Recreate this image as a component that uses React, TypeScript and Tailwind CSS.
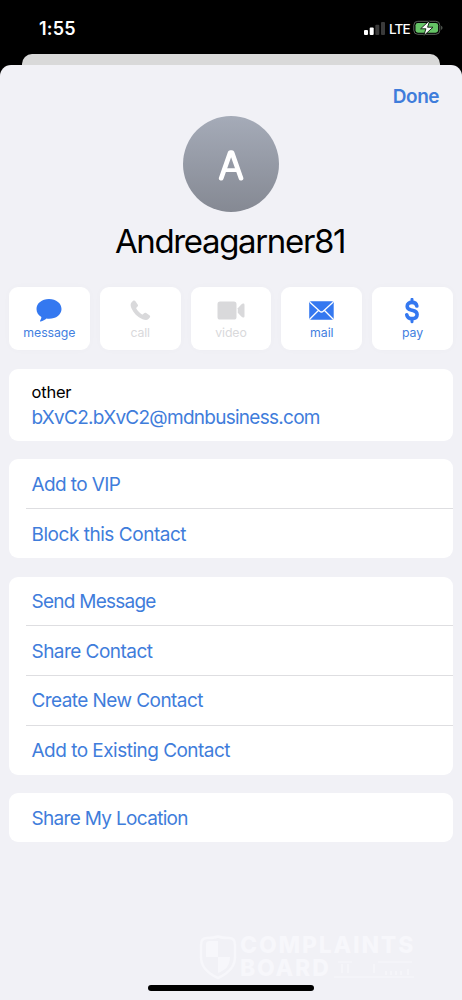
import type { ReactNode } from "react";

type Action = { label: string; icon: ReactNode; enabled: boolean; tracking: string };

const actions: Action[] = [
  {
    label: "message",
    enabled: true,
    tracking: "tracking-[-0.05px]",
    icon: (
      <svg width="26" height="24" viewBox="0 0.5 26 24" fill="currentColor">
        <path d="M13 .6C20.200.6 25.500 5 25.500 10.500S20.200 20.300 13 20.300c-.9 0-1.700 0-2.500-.2-1.600 1.400-3.600 2.400-5.800 2.800-.7.100-.9-.5-.5-1 .8-1 1.200-2.100 1.200-3.300C2.400 16.900.5 13.900.5 10.500.5 5 5.800.6 13 .6Z" />
      </svg>
    ),
  },
  {
    label: "call",
    enabled: false,
    tracking: "tracking-[-0.15px]",
    icon: (
      <svg width="21" height="21" viewBox="0 0 22 22" fill="currentColor">
        <path d="M1.700 2.300 3.300.9c.9-.7 1.700-.5 2.400.4L8 4.600c.6.9.5 1.600-.2 2.300L6.700 8c-.3.300-.3.600-.1 1 1.300 2.300 3.600 4.700 6 6.100.4.200.7.200 1-.1l1.100-1.100c.7-.7 1.400-.8 2.300-.2l3.300 2.300c.9.600 1.100 1.500.4 2.400l-1.400 1.600c-1.300 1.500-3.600 1.300-6.100.2C7.700 17.800 3.600 13.500 1.400 8.300.4 6 .3 3.700 1.700 2.300Z" />
      </svg>
    ),
  },
  {
    label: "video",
    enabled: false,
    tracking: "tracking-[-0.1px]",
    icon: (
      <svg width="28" height="20" viewBox="0 0.5 28 20" fill="currentColor">
        <rect x="0.500" y="1" width="19" height="18" rx="2.600" />
        <path d="M20.800 7.800 24.300 4c1.300-1.300 3.200-1.300 3.200.6v10.800c0 1.900-1.900 1.900-3.200.6l-3.500-3.800Z" />
      </svg>
    ),
  },
  {
    label: "mail",
    enabled: true,
    tracking: "tracking-[-0.05px]",
    icon: (
      <svg width="25" height="20" viewBox="0 0.5 25 20">
        <rect x="0.200" y="0.800" width="24.500" height="18.500" rx="2" fill="currentColor" />
        <path d="m.9 1.700 9.800 9c1.100 1 2.400 1 3.500 0l9.800-9M.9 18.500l8.700-8.800M24 18.500l-8.700-8.800" fill="none" stroke="white" strokeWidth="1.300" />
      </svg>
    ),
  },
  {
    label: "pay",
    enabled: true,
    tracking: "tracking-[0px]",
    icon: (
      <svg width="16" height="26" viewBox="1 0.5 16 26" fill="none" stroke="currentColor" strokeLinecap="round">
        <path d="M8 1.800v3.200M8 21v3.200" strokeWidth="3" />
        <path d="M12.800 8.500C12.500 6.100 10.800 4.900 8 4.900c-3 0-4.800 1.500-4.800 3.800 0 2.100 1.400 3.200 4 3.900l1.800.4c2.900.7 4.100 1.900 4.100 4 0 2.600-2.100 4.100-5.100 4.100s-4.900-1.400-5.200-3.900" strokeWidth="3.600" />
      </svg>
    ),
  },
];

type Item = { label: string; tracking: string };

const groups: { box: string; items: Item[] }[] = [
  {
    box: "h-[99px] mt-[18px]",
    items: [
      { label: "Add to VIP", tracking: "tracking-[-0.6px]" },
      { label: "Block this Contact", tracking: "tracking-[-0.47px]" },
    ],
  },
  {
    box: "h-[198px] mt-[18.600px]",
    items: [
      { label: "Send Message", tracking: "tracking-[-0.75px]" },
      { label: "Share Contact", tracking: "tracking-[-0.54px]" },
      { label: "Create New Contact", tracking: "tracking-[-0.57px]" },
      { label: "Add to Existing Contact", tracking: "tracking-[-0.52px]" },
    ],
  },
  {
    box: "h-[49.400px] mt-[18.400px]",
    items: [{ label: "Share My Location", tracking: "tracking-[-0.68px]" }],
  },
];

function StatusBar() {
  return (
    <header className="flex h-[54px] items-start justify-between pl-[39px] pr-[19px] pt-[17px] text-white">
      <span className="pt-[1px] text-[18px] font-semibold leading-[22px] tracking-[0.2px]">1:55</span>
      <div className="flex items-center pt-[3px]">
        <svg width="21" height="14" viewBox="0 0.5 21 14" fill="white">
          <rect x="0" y="8.500" width="4" height="5" rx="1" />
          <rect x="5.700" y="6" width="4" height="7.500" rx="1" />
          <rect x="11.300" y="3.300" width="4" height="10.200" rx="1" fill="#3a3a3a" />
          <rect x="17" y="0.500" width="4" height="13" rx="1" fill="#3a3a3a" />
        </svg>
        <span className="ml-[4px] w-[21px] whitespace-nowrap text-[13.500px] font-medium leading-[16px] tracking-[-0.8px]">LTE</span>
        <svg className="ml-[3px]" width="30" height="17" viewBox="0 0.5 30 17">
          <rect x="0.800" y="1.800" width="26" height="13" rx="4" fill="none" stroke="#5c645c" strokeWidth="1" />
          <rect x="2.500" y="3.400" width="22.600" height="9.800" rx="2.400" fill="#65c466" />
          <path d="M28.200 6.200v4.200c1.700-.7 1.700-3.500 0-4.200Z" fill="#5c645c" />
          <path d="M16.800.8 7.600 9.300h5.300L10.800 16.200 20 7.700h-5.400Z" fill="white" stroke="#0c180c" strokeWidth=".9" />
        </svg>
      </div>
    </header>
  );
}

function Watermark() {
  return (
    <div className="flex h-[48px] items-center text-[#f7f7fb]">
      <svg width="40" height="46" viewBox="0 0 40 46" fill="none">
        <path d="M20 2.500c4 1.500 8 1.500 11 1.500 4 0 6 3 6 7v12c0 9-6 16-17 21C9 39 3 32 3 23V11c0-4 2-7 6-7 3 0 7 0 11-1.500Z" stroke="currentColor" strokeWidth="2.500" />
        <path d="M8 11c0-3 1-4 4-4h8v16H8ZM20 23h12c0 8-4 13-12 16Z" fill="currentColor" />
      </svg>
      <div className="ml-[2px] w-[174px] whitespace-nowrap text-[23px] font-extrabold leading-[23px] tracking-[1.8px]">
        <div>COMPLAINTS</div>
        <div className="flex items-center justify-between">
          <span>BOARD</span>
          <svg width="80" height="18" viewBox="0 0 80 18" fill="none" stroke="currentColor">
            <path d="M0 17h80M4 2h14M44 2h34" strokeWidth="1" />
            <path d="M8 4v9M14 4v9M40 4v9M52 11v4M57 11v4M62 11v4M67 11v4M74 9v6" strokeWidth="1.300" />
          </svg>
        </div>
      </div>
    </div>
  );
}

export default function App() {
  return (
    <div className="flex h-[1000px] w-[462px] flex-col overflow-hidden bg-black font-[Inter,sans-serif]">
      <StatusBar />
      <div className="mx-[22px] h-[11px] shrink-0 rounded-t-[10px] bg-[#d9d9d9]" />
      <main className="flex flex-1 flex-col rounded-t-[11px] bg-[#f1f1f6] px-[9px]">
        <div className="flex h-[51px] justify-end pr-[14px] pt-[20px]">
          <button className="h-[24px] text-[19px] font-semibold leading-[24px] tracking-[-0.5px] text-[#3f7ddb]">Done</button>
        </div>
        <div className="flex size-[96px] shrink-0 items-center justify-center self-center rounded-full bg-linear-to-b from-[#a5abb8] to-[#858993]">
          <svg width="28" height="34" viewBox="0 0 28 34" fill="none" stroke="white" strokeWidth="4.700" strokeLinecap="round" strokeLinejoin="round">
            <path d="M4.200 31.200 13.200 5.600h1.800l9 25.600" />
            <path d="M7.500 23.200h13" strokeWidth="3.800" />
          </svg>
        </div>
        <h1 className="mt-[9px] h-[40px] self-center whitespace-nowrap pr-[2px] text-[33px] leading-[40px] tracking-[-1.350px] text-black">Andreagarner81</h1>
        <div className="mt-[26px] grid h-[63px] grid-cols-5 gap-[10px]">
          {actions.map((a) => (
            <button
              key={a.label}
              className={`flex flex-col items-center rounded-[9px] bg-white shadow-[0_0_8px_rgba(0,0,0,0.02)] ${a.enabled ? "text-[#3478f0]" : "text-[#d9d9db]"}`}
            >
              <span className="mt-[10px] flex h-[27px] items-center justify-center">{a.icon}</span>
              <span className={`mt-[1px] text-[12.300px] leading-[16px] ${a.tracking} ${a.enabled ? "text-[#4380df]" : ""}`}>{a.label}</span>
            </button>
          ))}
        </div>
        <section className="mt-[19px] h-[72px] rounded-[9px] bg-white pl-[22.500px] pt-[12px]">
          <div className="text-[16.500px] leading-[22px] tracking-[-0.2px] text-black">other</div>
          <div className="mt-[2px] text-[19px] leading-[26px] tracking-[-0.730px] text-[#3f7ddb]">bXvC2.bXvC2@mdnbusiness.com</div>
        </section>
        {groups.map((g) => (
          <section key={g.items[0].label} className={`flex flex-col rounded-[9px] bg-white pl-[17px] ${g.box}`}>
            {g.items.map((item, i) => (
              <button
                key={item.label}
                className={`flex flex-1 items-center pl-[5.500px] text-left text-[19px] leading-[24px] text-[#3f7ddb] ${item.tracking} ${i > 0 ? "border-t border-[#dedee1]" : ""}`}
              >
                <span className="pt-[2px]">{item.label}</span>
              </button>
            ))}
          </section>
        ))}
        <footer className="mt-auto flex flex-col">
          <div className="pl-[189px]">
            <Watermark />
          </div>
          <div className="mb-[9px] ml-[139px] mt-[4px] h-[6px] w-[166px] rounded-full bg-black" />
        </footer>
      </main>
    </div>
  );
}
